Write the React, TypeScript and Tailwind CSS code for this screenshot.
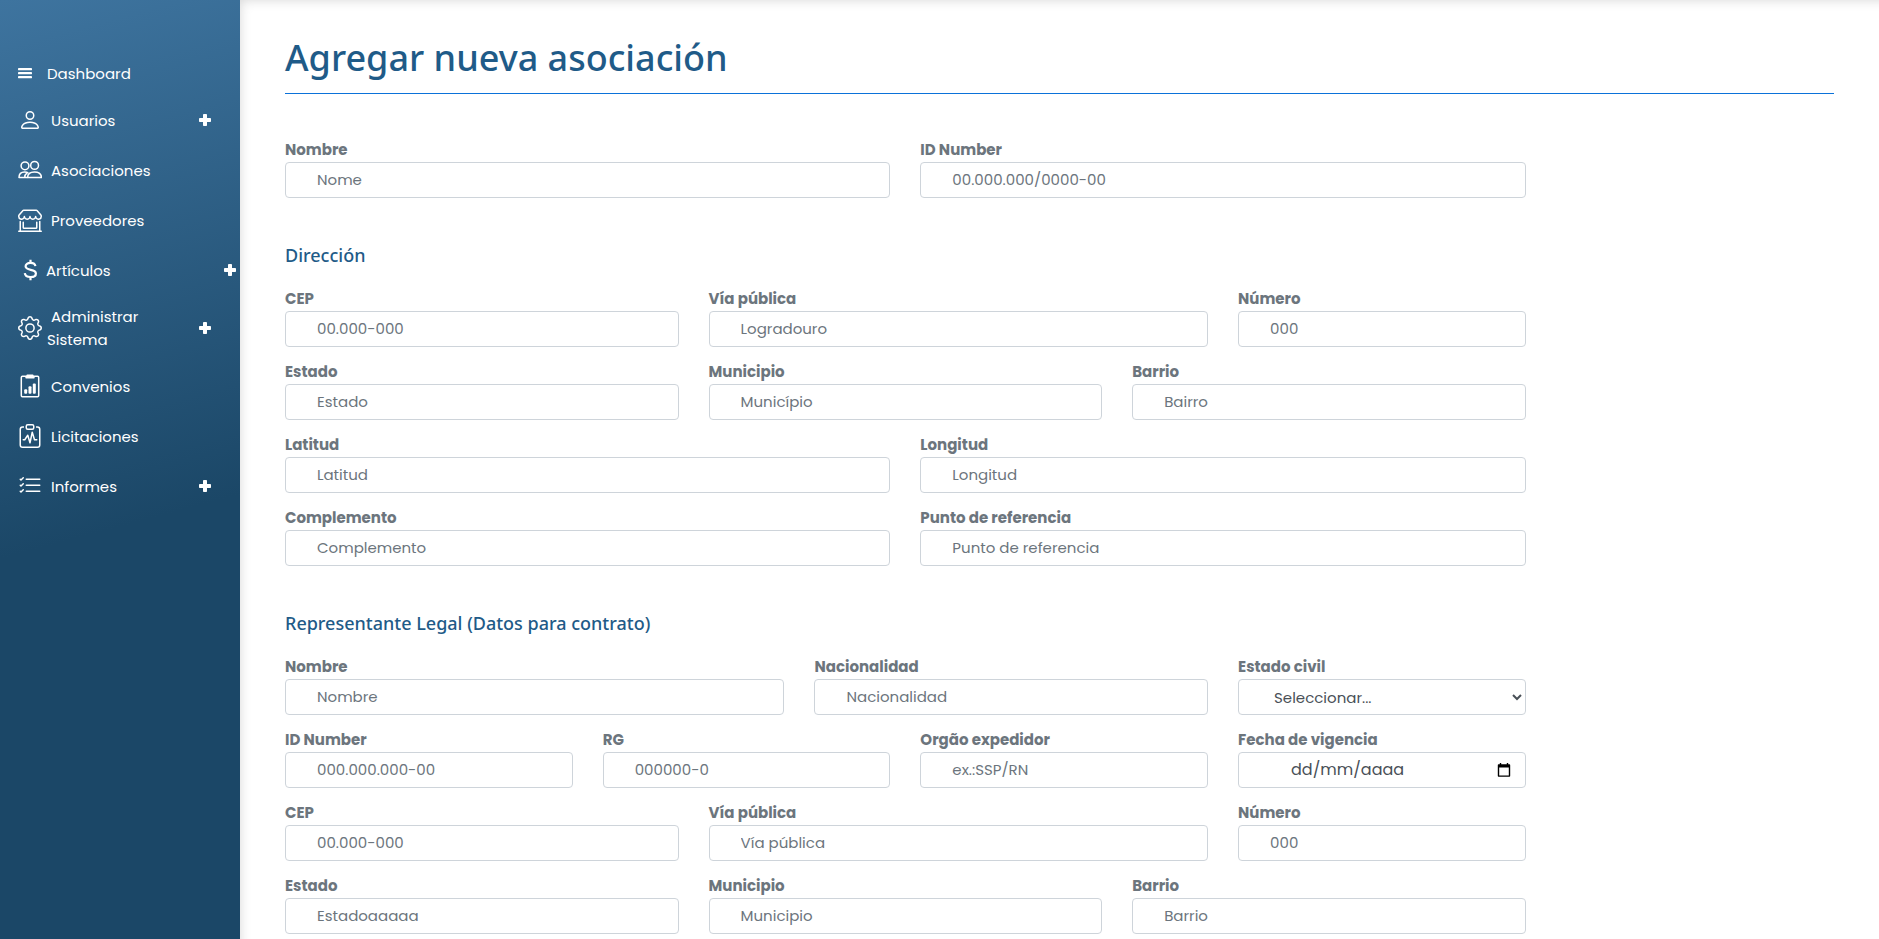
import React, { useId } from 'react';
import type { ReactNode } from 'react';
import {
  BsPerson,
  BsShopWindow,
  BsGear,
  BsClipboardPulse,
  BsListCheck,
} from 'react-icons/bs';

function BarsIcon() {
  return (
    <svg viewBox="0 0 14 14" className="size-[14px]" fill="currentColor" aria-hidden="true">
      <rect x="0" y="2" width="14" height="2.200" rx=".4" />
      <rect x="0" y="6" width="14" height="2.200" rx=".4" />
      <rect x="0" y="10" width="14" height="2.200" rx=".4" />
    </svg>
  );
}

function PlusIcon() {
  return (
    <svg viewBox="0 0 14 14" className="ml-auto size-[14px] shrink-0" fill="currentColor" aria-hidden="true">
      <rect x="5" y="1" width="4" height="12" rx=".8" />
      <rect x="1" y="5" width="12" height="4" rx=".8" />
    </svg>
  );
}

function PeopleIcon() {
  return (
    <svg viewBox="0 0 24 24" className="size-6" fill="none" stroke="currentColor" strokeWidth="1.5" strokeLinejoin="round" aria-hidden="true">
      <circle cx="16.600" cy="7.400" r="3.900" />
      <circle cx="7" cy="7.800" r="3.900" />
      <path d="M9.600 19.500c0-3.600 2.700-5.600 6.900-5.600s6.900 2 6.900 5.600z" />
      <path d="M9.600 19.500H1c0-3.600 2-5.600 5.600-5.600 1.500 0 2.700.3 3.700.9M6.700 19.500c0-2 .8-3.600 2.400-4.700" />
    </svg>
  );
}

function DollarIcon() {
  return (
    <svg viewBox="0 0 24 24" className="size-6" fill="none" stroke="currentColor" strokeWidth="2.200" aria-hidden="true">
      <path d="M17.400 8.200C17.100 6 15.400 4.900 12.500 4.900c-3 0-4.900 1.300-4.900 3.400 0 4.900 10.300 2.200 10.300 7.100 0 2.200-2.100 3.600-5.300 3.600-3.400 0-5.500-1.300-5.800-3.900" />
      <path d="M12.500 1.800v3.500M12.500 18.500v3.700" />
    </svg>
  );
}

function ReportIcon() {
  return (
    <svg viewBox="0 0 24 24" className="size-6" aria-hidden="true">
      <path d="M8 2.300H4.400c-.6 0-1.100.5-1.100 1.100v18.200c0 .6.5 1.100 1.100 1.100h15.200c.6 0 1.100-.5 1.100-1.100V3.400c0-.6-.5-1.100-1.100-1.100H16" fill="none" stroke="currentColor" strokeWidth="1.500" />
      <path d="M9.300.6h5.400c.5 0 .8.3 1 .7l1 2.200c.2.500-.1.900-.7.900H8c-.6 0-.900-.4-.7-.9l1-2.200c.2-.4.500-.7 1-.7z" fill="currentColor" />
      <rect x="6.200" y="15.200" width="3" height="4.500" rx="1" fill="currentColor" />
      <rect x="10.500" y="12.300" width="3" height="7.400" rx="1" fill="currentColor" />
      <rect x="14.800" y="9.400" width="3" height="10.300" rx="1" fill="currentColor" />
    </svg>
  );
}

type MenuEntry = { label: string; icon: ReactNode; expandable?: boolean; wide?: boolean };

const menu: MenuEntry[] = [
  { label: 'Usuarios', icon: <BsPerson className="size-6" />, expandable: true },
  { label: 'Asociaciones', icon: <PeopleIcon /> },
  { label: 'Proveedores', icon: <BsShopWindow className="size-6" /> },
  { label: 'Artículos', icon: <DollarIcon />, expandable: true, wide: true },
  { label: 'Administrar Sistema', icon: <BsGear className="size-6" />, expandable: true },
  { label: 'Convenios', icon: <ReportIcon /> },
  { label: 'Licitaciones', icon: <BsClipboardPulse className="size-6" /> },
  { label: 'Informes', icon: <BsListCheck className="size-6" />, expandable: true },
];

function Sidebar() {
  return (
    <nav className="w-60 shrink-0 bg-[linear-gradient(165deg,#3e749f_0px,#1b4767_540px)] pt-[51px] text-[15px] leading-[23px] text-white">
      <a href="#dashboard" className="flex h-11 items-center gap-[15px] pl-[18px]">
        <BarsIcon />
        Dashboard
      </a>
      <ul>
        {menu.map((m) => (
          <li key={m.label}>
            <a
              href="#menu"
              className={`flex min-h-[50px] items-center py-[10px] pl-[18px] ${m.wide ? 'pr-[3px]' : 'pr-7'}`}
            >
              <span className="shrink-0">{m.icon}</span>
              <span className={m.wide ? 'indent-1' : 'ml-[5px] w-24 indent-1'}>{m.label}</span>
              {m.expandable && <PlusIcon />}
            </a>
          </li>
        ))}
      </ul>
    </nav>
  );
}

const spans = {
  3: 'col-span-3',
  4: 'col-span-4',
  5: 'col-span-5',
  6: 'col-span-6',
};

const control =
  'block h-9 w-full rounded-[4px] border border-[#ced4da] bg-white text-[15px] leading-[22px]';

type FieldDef = {
  label: string;
  hint: string;
  span: keyof typeof spans;
  kind?: 'select' | 'date';
};

function Field({ label, hint, span, kind }: FieldDef) {
  const id = useId();
  return (
    <div className={spans[span]}>
      <label htmlFor={id} className="block h-6 text-[15px] font-bold leading-6 text-[#6c757d]">
        {label}
      </label>
      {kind === 'select' ? (
        <select id={id} className={`${control} pl-[31px] text-[#495057]`}>
          <option>{hint}</option>
        </select>
      ) : kind === 'date' ? (
        <div className={`${control} flex items-center pl-[52px] pr-[14px]`}>
          <input
            id={id}
            type="text"
            placeholder={hint}
            className="min-w-0 flex-1 text-base text-[#495057] outline-none placeholder:text-[#495057]"
          />
          <button type="button" aria-label="Abrir calendario" className="text-black">
            <svg viewBox="0 0 14 14" className="size-[14px]" fill="currentColor" aria-hidden="true">
              <path fillRule="evenodd" d="M1.800 1.200h1V0h1.400v1.200h5.600V0h1.400v1.200h1c.6 0 1 .4 1 1v10.600c0 .6-.4 1-1 1H1.800c-.6 0-1-.4-1-1V2.200c0-.6.4-1 1-1zM2.200 4.600v7.800h9.600V4.600z" />
            </svg>
          </button>
        </div>
      ) : (
        <input
          id={id}
          type="text"
          placeholder={hint}
          className={`${control} px-[31px] pb-px text-[#495057] placeholder:text-[#6c757d]`}
        />
      )}
    </div>
  );
}

type Group = { title?: string; fields: FieldDef[] };

const groups: Group[] = [
  {
    fields: [
      { label: 'Nombre', hint: 'Nome', span: 6 },
      { label: 'ID Number', hint: '00.000.000/0000-00', span: 6 },
    ],
  },
  {
    title: 'Dirección',
    fields: [
      { label: 'CEP', hint: '00.000-000', span: 4 },
      { label: 'Vía pública', hint: 'Logradouro', span: 5 },
      { label: 'Número', hint: '000', span: 3 },
      { label: 'Estado', hint: 'Estado', span: 4 },
      { label: 'Municipio', hint: 'Município', span: 4 },
      { label: 'Barrio', hint: 'Bairro', span: 4 },
      { label: 'Latitud', hint: 'Latitud', span: 6 },
      { label: 'Longitud', hint: 'Longitud', span: 6 },
      { label: 'Complemento', hint: 'Complemento', span: 6 },
      { label: 'Punto de referencia', hint: 'Punto de referencia', span: 6 },
    ],
  },
  {
    title: 'Representante Legal (Datos para contrato)',
    fields: [
      { label: 'Nombre', hint: 'Nombre', span: 5 },
      { label: 'Nacionalidad', hint: 'Nacionalidad', span: 4 },
      { label: 'Estado civil', hint: 'Seleccionar...', span: 3, kind: 'select' },
      { label: 'ID Number', hint: '000.000.000-00', span: 3 },
      { label: 'RG', hint: '000000-0', span: 3 },
      { label: 'Orgão expedidor', hint: 'ex.:SSP/RN', span: 3 },
      { label: 'Fecha de vigencia', hint: 'dd/mm/aaaa', span: 3, kind: 'date' },
      { label: 'CEP', hint: '00.000-000', span: 4 },
      { label: 'Vía pública', hint: 'Vía pública', span: 5 },
      { label: 'Número', hint: '000', span: 3 },
      { label: 'Estado', hint: 'Estadoaaaaa', span: 4 },
      { label: 'Municipio', hint: 'Municipio', span: 4 },
      { label: 'Barrio', hint: 'Barrio', span: 4 },
    ],
  },
];

const headingFont = "font-['Segoe_UI','Selawik','Noto_Sans',sans-serif] font-medium text-[#1f5b88]";

export default function App() {
  return (
    <div className="flex min-h-screen font-['Poppins','Inter',sans-serif]">
      <Sidebar />
      <main className="min-w-0 flex-1 bg-white px-[45px] pt-8 shadow-[inset_8px_8px_12px_-8px_rgba(0,0,0,0.16)]">
        <h1 className={`${headingFont} border-b border-[#0b72d9] pb-[9px] text-[36px] leading-[52px]`}>
          Agregar nueva asociación
        </h1>
        <form className="w-[80.1%] pt-11">
          {groups.map((g, i) => (
            <section key={i} className="pb-[43px] last:pb-1">
              {g.title && <h2 className={`${headingFont} pb-[18px] text-[18px] leading-7`}>{g.title}</h2>}
              <div className="grid grid-cols-12 gap-x-[30px] gap-y-[13px]">
                {g.fields.map((f) => (
                  <Field key={f.label} {...f} />
                ))}
              </div>
            </section>
          ))}
        </form>
      </main>
    </div>
  );
}
